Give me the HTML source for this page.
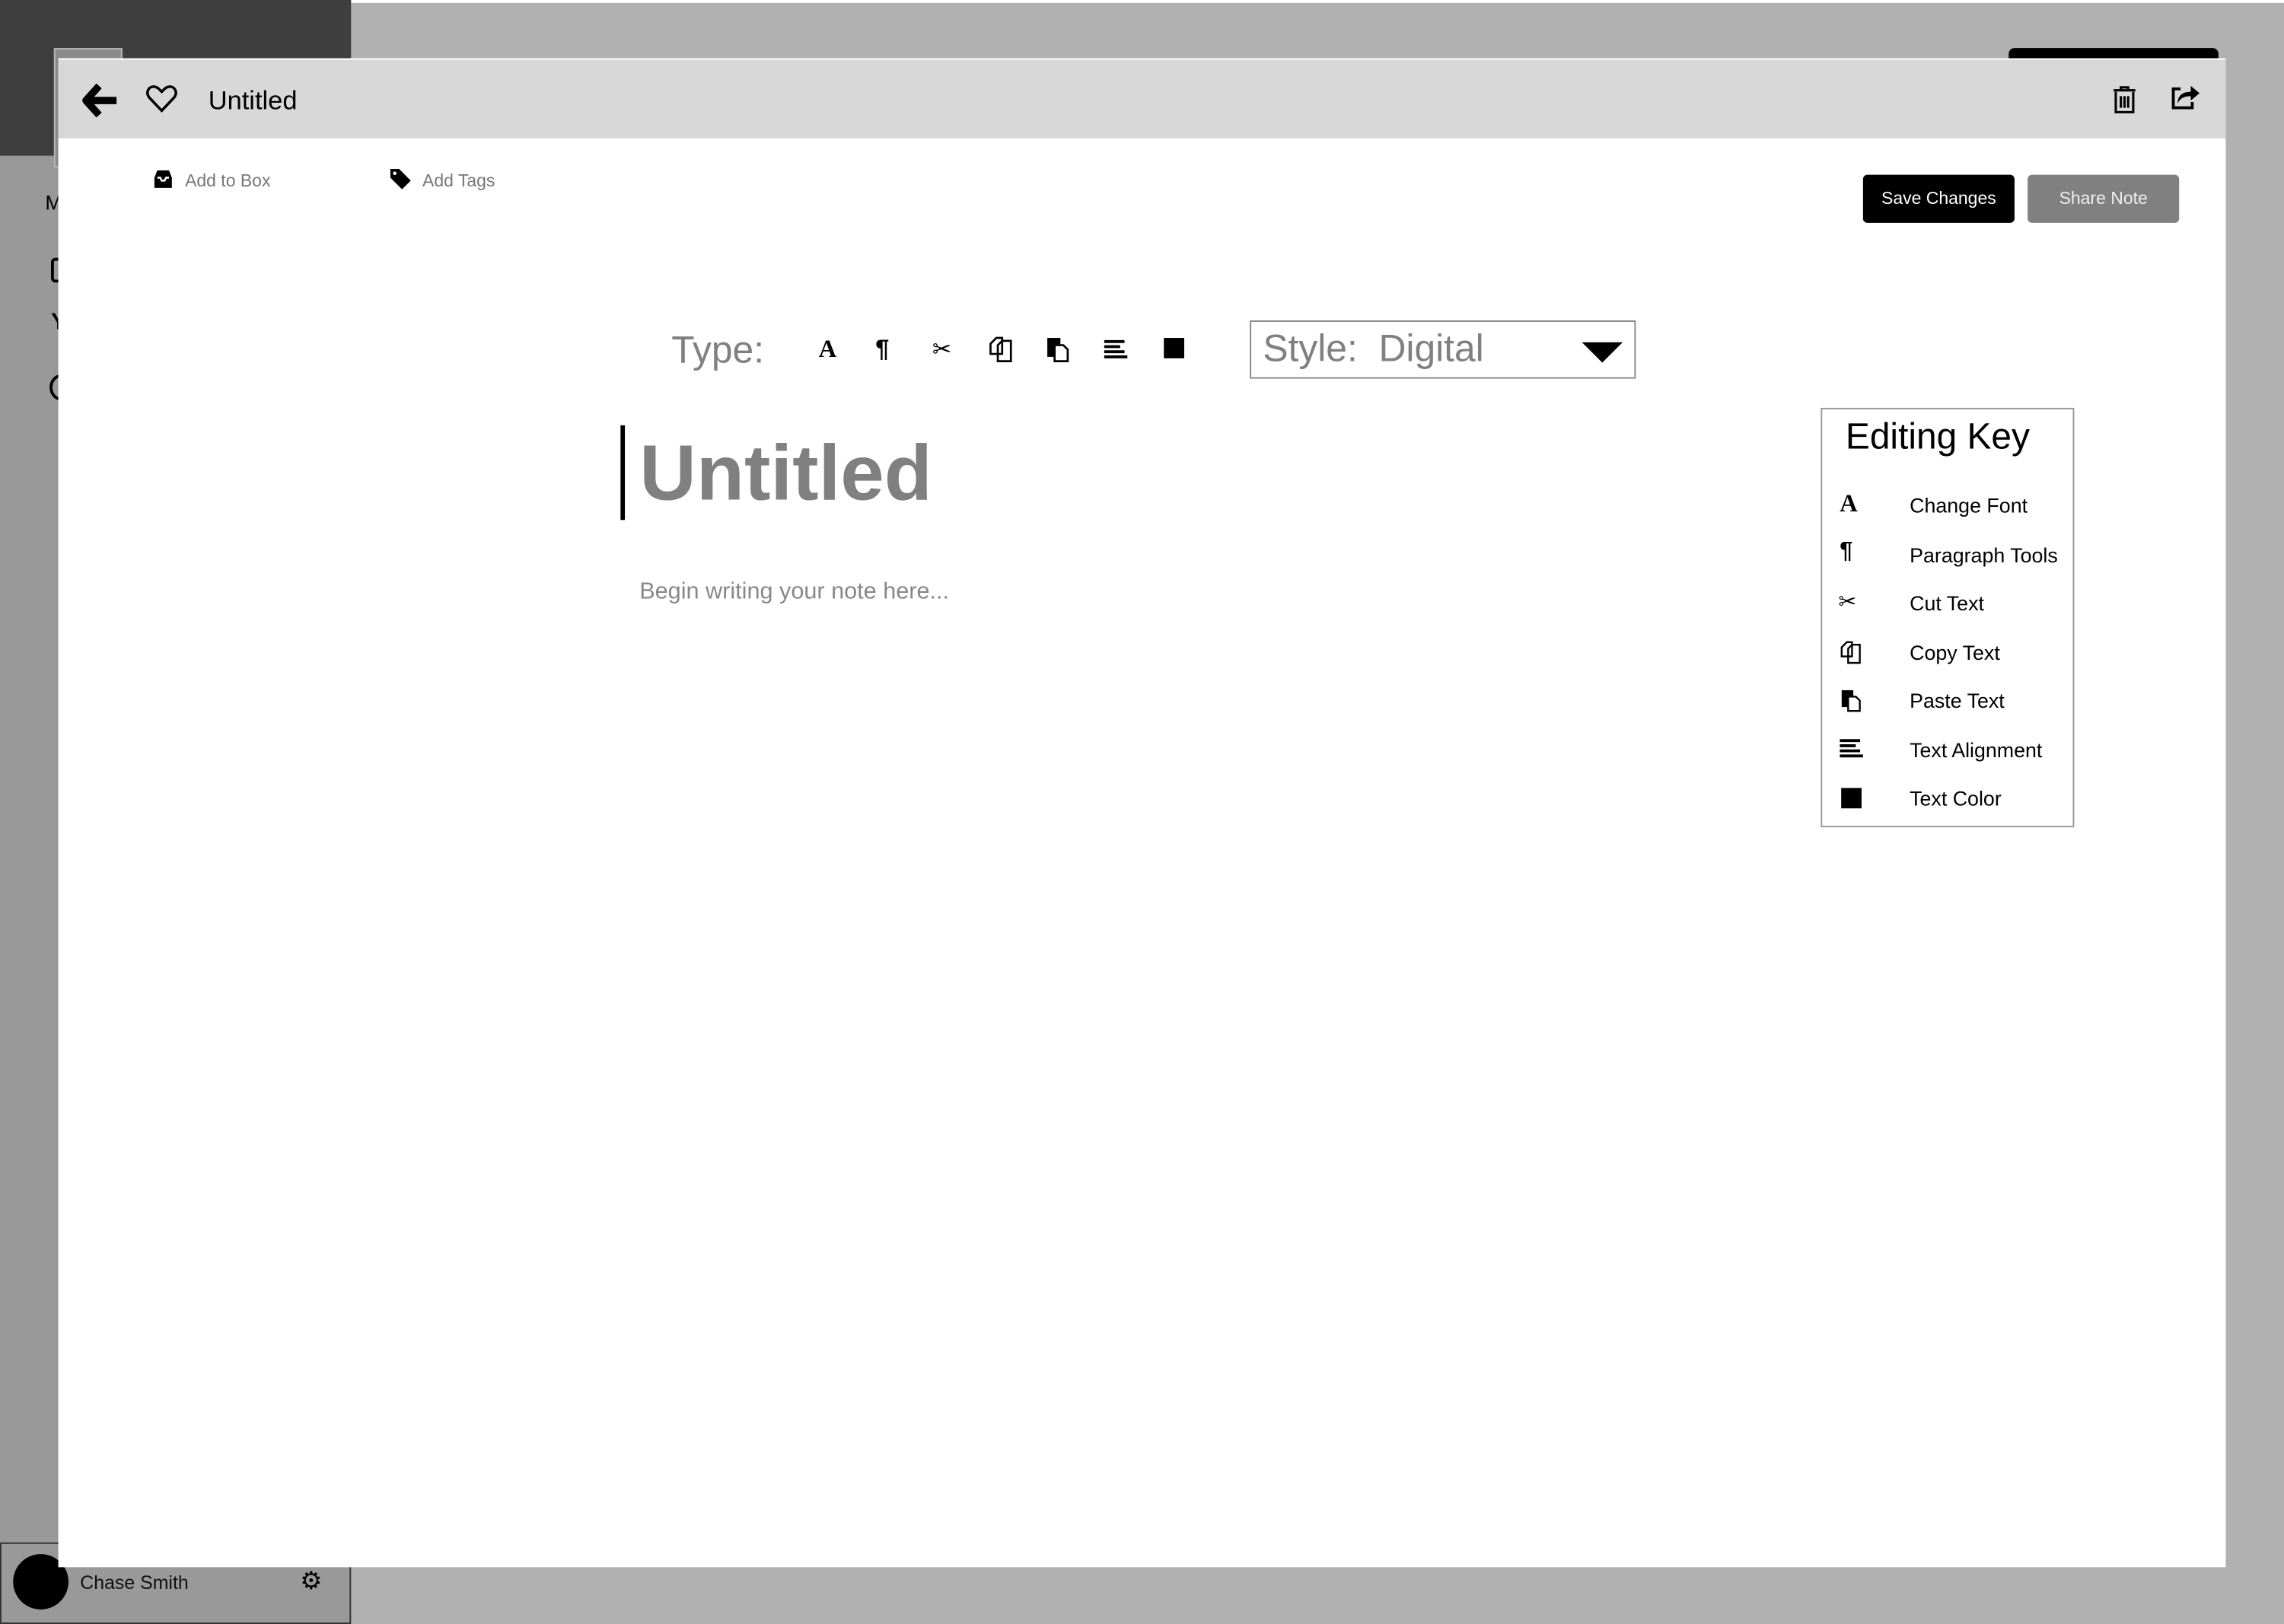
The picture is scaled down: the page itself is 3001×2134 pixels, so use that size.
<!DOCTYPE html>
<html><head><meta charset="utf-8"><style>
html,body{margin:0;padding:0;width:3001px;height:2134px;overflow:hidden;background:#b1b1b1}
#w{position:absolute;left:0;top:0;width:1568px;height:1115px;transform:scale(1.9139);transform-origin:0 0;font-family:"Liberation Sans",sans-serif}
.a{position:absolute}
.t{position:absolute;white-space:nowrap}
</style></head><body><div id="w">
<div class="a" style="left:0;top:0;width:1568px;height:2px;background:#fff"></div>
<div class="a" style="left:0;top:0;width:241px;height:107px;background:#3e3e3e"></div>
<div class="a" style="left:0;top:107px;width:241px;height:1008px;background:#999"></div>
<div class="a" style="left:37px;top:33px;width:45px;height:80px;border:1px solid #b8b8b8;background:#8a8a8a"></div>
<div class="t" style="left:31px;top:131px;font-size:14px">M</div>
<div class="a" style="left:35px;top:177px;width:8px;height:13px;border:2px solid #000;border-radius:3px"></div>
<div class="t" style="left:35px;top:213px;font-size:16px;font-weight:bold">Y</div>
<div class="a" style="left:34px;top:257px;width:12px;height:14px;border:2px solid #000;border-radius:50%"></div>
<div class="a" style="left:1379px;top:33px;width:144px;height:12px;background:#000;border-radius:4px"></div>
<div class="a" style="left:0;top:1059px;width:239px;height:54px;border:1px solid #333;background:#999"></div>
<div class="a" style="left:9px;top:1067px;width:38px;height:38px;border-radius:50%;background:#000"></div>
<div class="t" style="left:55px;top:1079px;font-size:13px;color:#111">Chase Smith</div>
<div class="t" style="left:206px;top:1076px;font-size:17px">⚙</div>
<div class="a" style="left:40px;top:40px;width:1488px;height:1035px;background:#fff;border-top:1px solid #fff"></div>
<div class="a" style="left:40px;top:41px;width:1488px;height:54px;background:#d8d8d8"></div>
<svg class="a" style="left:56px;top:57px" width="26" height="24" viewBox="0 0 26 24"><path d="M12 2 L3 12 L12 22 M4 12 H24" stroke="#000" stroke-width="5" fill="none" stroke-linejoin="round"/></svg>
<svg class="a" style="left:100px;top:58px" width="22" height="20" viewBox="0 0 22 20"><path d="M11 18 L2.5 9 C-0.5 5 2.5 1 6 1.5 C8.5 1.8 10 4 11 5 C12 4 13.5 1.8 16 1.5 C19.5 1 22.5 5 19.5 9 Z" stroke="#000" stroke-width="1.8" fill="none"/></svg>
<div class="t" style="left:143px;top:59px;font-size:18px;color:#000">Untitled</div>
<svg class="a" style="left:1450px;top:59px" width="17" height="19" viewBox="0 0 17 19"><path d="M1 3H16M6 3V1H11V3M2.5 4V18H14.5V4M6 7V15M8.5 7V15M11 7V15" stroke="#000" stroke-width="1.6" fill="none"/></svg>
<svg class="a" style="left:1489px;top:57px" width="22" height="20" viewBox="0 0 22 20"><path d="M8 4H3V17H16V13" stroke="#000" stroke-width="2" fill="none"/><path d="M6 14C6 8 10 6 15 6V2L21 7L15 12V9C11 9 8 10 6 14Z" fill="#000"/></svg>
<svg class="a" style="left:105px;top:116px" width="14" height="14" viewBox="0 0 14 14"><path d="M1 6L3 1H11L13 6V13H1Z" fill="#000"/><path d="M3 6H5L6 8H8L9 6H11" stroke="#fff" stroke-width="1.3" fill="none"/></svg>
<div class="t" style="left:127px;top:117px;font-size:12px;color:#777">Add to Box</div>
<svg class="a" style="left:267px;top:115px" width="16" height="16" viewBox="0 0 16 16"><path d="M1 1H7L15 9L9 15L1 7Z" fill="#000"/><circle cx="4" cy="4" r="1.2" fill="#fff"/></svg>
<div class="t" style="left:290px;top:117px;font-size:12px;color:#777">Add Tags</div>
<div class="a" style="left:1279px;top:120px;width:104px;height:33px;background:#000;border-radius:3px;color:#fff;font-size:12px;text-align:center;line-height:33px">Save Changes</div>
<div class="a" style="left:1392px;top:120px;width:104px;height:33px;background:#808080;border-radius:3px;color:#eee;font-size:12px;text-align:center;line-height:33px">Share Note</div>
<div class="t" style="left:461px;top:225px;font-size:26px;color:#808080">Type:</div>
<div class="t" style="left:562px;top:230px;font-size:17px;font-family:'Liberation Serif',serif;font-weight:bold">A</div>
<div class="t" style="left:601px;top:230px;font-size:17px;font-weight:bold">¶</div>
<div class="t" style="left:640px;top:230px;font-size:16px">✂</div>
<svg class="a" style="left:679px;top:231px" width="17" height="18" viewBox="0 0 17 18"><path d="M1 5L5 1H9V12H1ZM6 6L9 3H15V17H6Z" stroke="#000" stroke-width="1.4" fill="#fff"/></svg>
<svg class="a" style="left:718px;top:231px" width="17" height="18" viewBox="0 0 17 18"><rect x="1" y="1" width="9" height="13" fill="#000"/><path d="M6 6H12L15 9V17H6Z" stroke="#000" stroke-width="1.4" fill="#fff"/></svg>
<svg class="a" style="left:758px;top:233px" width="16" height="14" viewBox="0 0 16 14"><path d="M0 1.5H14M0 5H11M0 8.5H14M0 12H16" stroke="#000" stroke-width="2"/></svg>
<div class="a" style="left:799px;top:232px;width:14px;height:14px;background:#000"></div>
<div class="a" style="left:858px;top:220px;width:263px;height:38px;border:1.5px solid #888"></div>
<div class="t" style="left:867px;top:224px;font-size:26px;color:#808080">Style:&nbsp;&nbsp;Digital</div>
<svg class="a" style="left:1086px;top:234px" width="28" height="16" viewBox="0 0 28 16"><path d="M0 1H28L14 15Z" fill="#000"/></svg>
<div class="a" style="left:426px;top:292px;width:3px;height:65px;background:#000"></div>
<div class="t" style="left:439px;top:294px;font-size:54px;font-weight:bold;color:#808080">Untitled</div>
<div class="t" style="left:439px;top:398px;font-size:16px;color:#888">Begin writing your note here...</div>
<div class="a" style="left:1250px;top:280px;width:172px;height:286px;border:1px solid #999;background:#fff"></div>
<div class="t" style="left:1267px;top:286px;font-size:25px;color:#000">Editing Key</div>
<div class="t" style="left:1263px;top:336px;font-size:17px;font-family:'Liberation Serif',serif;font-weight:bold">A</div>
<div class="t" style="left:1263px;top:370px;font-size:16px;font-weight:bold">¶</div>
<div class="t" style="left:1262px;top:404px;font-size:15px">✂</div>
<svg class="a" style="left:1263px;top:440px" width="16" height="16" viewBox="0 0 17 18"><path d="M1 5L5 1H9V12H1ZM6 6L9 3H15V17H6Z" stroke="#000" stroke-width="1.4" fill="#fff"/></svg>
<svg class="a" style="left:1263px;top:473px" width="16" height="16" viewBox="0 0 17 18"><rect x="1" y="1" width="9" height="13" fill="#000"/><path d="M6 6H12L15 9V17H6Z" stroke="#000" stroke-width="1.4" fill="#fff"/></svg>
<svg class="a" style="left:1263px;top:507px" width="16" height="14" viewBox="0 0 16 14"><path d="M0 1.5H14M0 5H11M0 8.5H14M0 12H16" stroke="#000" stroke-width="2"/></svg>
<div class="a" style="left:1264px;top:541px;width:14px;height:14px;background:#000"></div>
<div class="t" style="left:1311px;top:339px;font-size:14px">Change Font</div>
<div class="t" style="left:1311px;top:373px;font-size:14px">Paragraph Tools</div>
<div class="t" style="left:1311px;top:406px;font-size:14px">Cut Text</div>
<div class="t" style="left:1311px;top:440px;font-size:14px">Copy Text</div>
<div class="t" style="left:1311px;top:473px;font-size:14px">Paste Text</div>
<div class="t" style="left:1311px;top:507px;font-size:14px">Text Alignment</div>
<div class="t" style="left:1311px;top:540px;font-size:14px">Text Color</div>
</div></body></html>
